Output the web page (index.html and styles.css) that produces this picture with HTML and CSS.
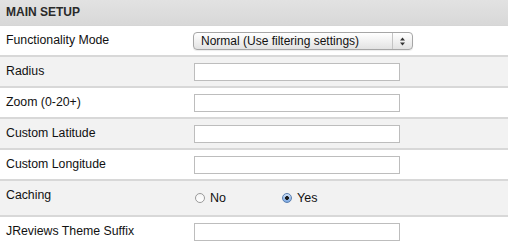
FILE: index.html
```html
<!DOCTYPE html>
<html lang="en">
<head>
    <meta charset="UTF-8">
    <title>Main Setup</title>
    <link rel="stylesheet" href="styles.css">
</head>
<body>
    <div class="panel">
        <div class="panel-head">MAIN SETUP</div>

        <div class="row">
            <div class="label">Functionality Mode</div>
            <div class="field">
                <div class="select">
                    <span class="select-text">Normal (Use filtering settings)</span>
                    <span class="select-arrows">
                        <svg width="7" height="9" viewBox="0 0 7 9">
                            <path d="M3.5 0.5 L6 3.5 L1 3.5 Z" fill="#333"/>
                            <path d="M3.5 8.5 L6 5.5 L1 5.5 Z" fill="#333"/>
                        </svg>
                    </span>
                </div>
            </div>
        </div>

        <div class="row alt">
            <div class="label">Radius</div>
            <div class="field"><input type="text" class="text-input"></div>
        </div>

        <div class="row">
            <div class="label">Zoom (0-20+)</div>
            <div class="field"><input type="text" class="text-input"></div>
        </div>

        <div class="row alt">
            <div class="label">Custom Latitude</div>
            <div class="field"><input type="text" class="text-input"></div>
        </div>

        <div class="row">
            <div class="label">Custom Longitude</div>
            <div class="field"><input type="text" class="text-input"></div>
        </div>

        <div class="row alt tall">
            <div class="label">Caching</div>
            <div class="field radios">
                <label class="radio"><span class="dot"></span>No</label>
                <label class="radio"><span class="dot checked"></span>Yes</label>
            </div>
        </div>

        <div class="row last">
            <div class="label">JReviews Theme Suffix</div>
            <div class="field"><input type="text" class="text-input"></div>
        </div>
    </div>
</body>
</html>
```

FILE: styles.css
```css
body {
    margin: 0;
    padding: 0;
    background: #fff;
    font-family: 'Liberation Sans', Arial, sans-serif;
    color: #111;
}
.panel {
    width: 508px;
}
.panel-head {
    height: 25px;
    line-height: 25px;
    padding-left: 6px;
    background: linear-gradient(#e2e2e2, #d8d8d8);
    font-size: 12px;
    font-weight: bold;
    color: #2a2a2a;
    border-bottom: 1px solid #d6d6d6;
}
.row {
    display: flex;
    height: 29px;
    border-bottom: 2px solid #d8d8d8;
    background: #fff;
}
.row.alt {
    background: #f2f2f2;
}
.row.tall {
    height: 34px;
}
.row.last {
    border-bottom: none;
}
.label {
    width: 187px;
    padding: 6px 0 0 6px;
    font-size: 12.3px;
    line-height: 16px;
}
.field {
    flex: 1;
    display: flex;
    align-items: center;
}
.text-input {
    box-sizing: border-box;
    width: 206px;
    height: 18px;
    margin: 1px 0 0 1px;
    padding: 0;
    border: 1px solid #bdbdbd;
    background: #fff;
}
.select {
    box-sizing: border-box;
    display: flex;
    align-items: center;
    width: 220px;
    height: 18px;
    margin-top: 1px;
    border: 1px solid #a6a6a6;
    border-radius: 4px;
    background: linear-gradient(#ffffff, #eeeeee 60%, #e2e2e2);
    box-shadow: 0 1px 1px rgba(0, 0, 0, 0.08);
}
.select-text {
    flex: 1;
    padding-left: 7px;
    font-size: 12px;
    color: #111;
}
.select-arrows {
    display: flex;
    align-items: center;
    justify-content: center;
    width: 19px;
    height: 16px;
    border-left: 1px solid #c4c4c4;
}
.radios {
    padding-top: 9px;
    align-items: flex-start;
}
.radio {
    display: flex;
    align-items: center;
    width: 85px;
    font-size: 12.5px;
    line-height: 16px;
    padding-left: 2px;
}
.dot {
    box-sizing: border-box;
    width: 10px;
    height: 10px;
    margin-right: 5px;
    border: 1px solid #9a9a9a;
    border-radius: 50%;
    background: linear-gradient(#f4f4f4, #ffffff);
}
.dot.checked {
    border-color: #5a7fb0;
    background: radial-gradient(circle, #1d1d1d 0, #1d1d1d 1.6px, transparent 2.2px),
        linear-gradient(#cfe0f6, #7ba7e0);
}
```
